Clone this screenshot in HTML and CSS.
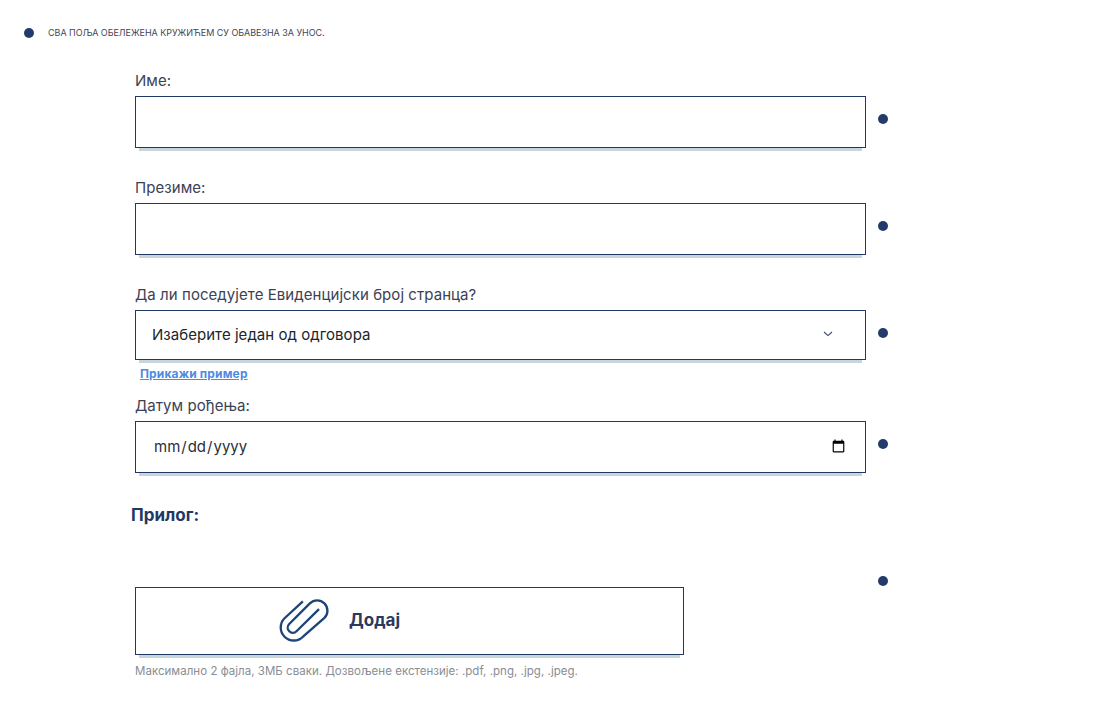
FILE: index.html
```html
<!DOCTYPE html>
<html lang="sr">
<head>
<meta charset="utf-8">
<title>Форма</title>
<link rel="stylesheet" href="styles.css">
</head>
<body>
<p class="note"><span class="dot"></span><span class="note-text">СВА ПОЉА ОБЕЛЕЖЕНА КРУЖИЋЕМ СУ ОБАВЕЗНА ЗА УНОС.</span></p>
<form class="form">
  <div class="field">
    <label class="label">Име:</label>
    <div class="row"><input class="control" type="text"><span class="dot"></span></div>
  </div>
  <div class="field">
    <label class="label">Презиме:</label>
    <div class="row"><input class="control" type="text"><span class="dot"></span></div>
  </div>
  <div class="field field-select">
    <label class="label">Да ли поседујете Евиденцијски број странца?</label>
    <div class="row row-select">
      <div class="select-wrap">
        <select class="control select"><option>Изаберите један од одговора</option></select>
        <svg class="chevron" width="10" height="6" viewBox="0 0 10 6"><path d="M1 1l4 3.6L9 1" fill="none" stroke="#3b4a66" stroke-width="1.1"/></svg>
      </div>
      <span class="dot"></span>
    </div>
    <a class="example" href="#">Прикажи пример</a>
  </div>
  <div class="field field-date">
    <label class="label">Датум рођења:</label>
    <div class="row"><input class="control date" type="date"><span class="dot"></span></div>
  </div>
  <h2 class="heading">Прилог:</h2>
  <div class="attach-dot"><span class="dot"></span></div>
  <button class="attach" type="button">
    <svg class="clip" width="70" height="60" viewBox="-2.5 -2 75 64"><path d="M32.7 10L13.1 28.1A14 14 0 0 0 32.9 47.9L55.8 27.8A11 11 0 0 0 40.2 12.2L18.1 34.3A5.5 5.5 0 0 0 25.9 42.1L50 18.3" fill="none" stroke="#1f4478" stroke-width="2.5"/></svg>
    <span class="attach-text">Додај</span>
  </button>
  <p class="hint">Максимално 2 фајла, 3МБ сваки. Дозвољене екстензије: .pdf, .png, .jpg, .jpeg.</p>
</form>
</body>
</html>
```
FILE: styles.css
```css
* { box-sizing: border-box; }
html, body { margin: 0; background: #fff; }
body { font-family: Inter, "Open Sans", sans-serif; color: #3b4254; height: 703px; overflow: hidden; }
.dot { flex: none; display: block; width: 10px; height: 10px; border-radius: 50%; background: #233b6b; }
.note { display: flex; align-items: center; gap: 14px; margin: 0; padding: 27px 0 0 24px; height: 38px; }
.note-text { font-size: 9px; line-height: 12px; color: #3f4658; letter-spacing: -.04px; }
.form { margin: 34px 0 0 135px; width: 760px; }
.field { margin-bottom: 31px; }
.field-select { margin-bottom: 0; }
.field-date { margin-top: 16px; margin-bottom: 0; }
.label { display: block; font-size: 15px; line-height: 18px; margin-bottom: 6px; letter-spacing: .06px; }
.row { display: flex; align-items: center; gap: 12px; }
.row > .dot { margin-bottom: 6px; }
.row-select > .dot { margin-bottom: 4px; }
.control { display: block; width: 731px; height: 52px; border: 1px solid #1f3864; border-radius: 0; background: #fff; padding: 0 17px; font: inherit; font-size: 15px; color: #212529; box-shadow: 0 7px 0 -4px #c6d6dc; outline: 0; }
.select-wrap { position: relative; flex: none; }
.select { height: 50px; padding: 0 0 2px 16px; letter-spacing: .04px; appearance: none; -webkit-appearance: none; }
.chevron { position: absolute; right: 33px; top: 21px; }
.example { display: block; margin: 6px 0 0 5px; font-size: 12px; line-height: 15px; font-weight: 700; letter-spacing: .15px; color: #4f8be0; }
.date { color: #2a2f3a; padding-bottom: 2px; }
.heading { margin: 32px 0 0 -4px; font-size: 17px; line-height: 20px; font-weight: 700; color: #1f3864; }
.attach-dot { display: flex; justify-content: flex-end; width: 753px; margin-top: 51px; }
.attach { display: flex; align-items: center; gap: 9px; width: 549px; height: 68px; margin-top: 1px; padding: 0 0 2px 134px; border: 1px solid #1f3864; border-radius: 0; background: #fff; box-shadow: 0 7px 0 -4px #c6d6dc; font: inherit; font-size: 17px; font-weight: 700; color: #2a3a5e; }
.clip { flex: none; }
.hint { margin: 9px 0 0; font-size: 11.5px; line-height: 14px; letter-spacing: .03px; color: #8a8d93; }
```
